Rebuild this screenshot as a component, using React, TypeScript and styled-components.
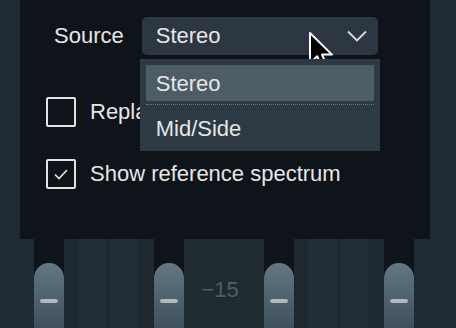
import React from 'react';
import styled, { createGlobalStyle } from 'styled-components';

const GlobalStyle = createGlobalStyle`
    body {
        margin: 0;
        background: #1e2930;
        font-family: "Liberation Sans", Arial, sans-serif;
    }
`;

const Screen = styled.div`
    position: relative;
    width: 456px;
    height: 328px;
    overflow: hidden;
    display: flex;
    flex-direction: column;
    background: #1e2930;
    box-shadow: inset -2px 0 0 #3a444b;
`;

const Top = styled.div`
    display: flex;
    height: 239px;
`;

const Strip = styled.div<{ $w: number }>`
    width: ${p => p.$w}px;
    background: #1f2a32;
`;

const Panel = styled.section`
    flex: 1;
    background: #0f141a;
    padding-top: 17px;
    color: #e6e6e6;
    font-size: 22px;
`;

const SourceRow = styled.div`
    display: flex;
    align-items: center;
    gap: 18px;
    padding-left: 34px;
`;

const SelectWrap = styled.div`
    position: relative;
`;

const SelectBox = styled.div`
    width: 236px;
    height: 38px;
    box-sizing: border-box;
    display: flex;
    align-items: center;
    justify-content: space-between;
    padding: 0 11px 0 14px;
    background: #2c3741;
    border-radius: 5px;

    svg{
        width: 20px;
        height: 12px;
    }
`;

const Menu = styled.ul`
    position: absolute;
    left: -2px;
    top: 42px;
    width: 240px;
    margin: 0;
    padding: 6px;
    box-sizing: border-box;
    list-style: none;
    background: #2e3a43;
    z-index: 2;
`;

const MenuItem = styled.li<{ $active?: boolean }>`
    height: ${p => (p.$active ? 36 : 40)}px;
    box-sizing: border-box;
    display: flex;
    align-items: center;
    padding: ${p => (p.$active ? '1px 0 0 10px' : '7px 0 0 10px')};
    background: ${p => (p.$active ? '#4e5c66' : 'transparent')};
`;

const Divider = styled.li`
    height: 0;
    margin: 3px 0 0 0;
    border-top: 1px dotted #6c7880;
`;

const CheckRow = styled.label<{ $top: number }>`
    display: flex;
    align-items: center;
    gap: 14px;
    margin-top: ${p => p.$top}px;
    padding-left: 26px;
`;

const Box = styled.span`
    width: 30px;
    height: 30px;
    box-sizing: border-box;
    border: 2px solid #e2e2e2;
    border-radius: 2px;
    display: flex;
    align-items: center;
    justify-content: center;

    svg{
        width: 14px;
        height: 11px;
    }
`;

const Faders = styled.div`
    display: flex;
    height: 89px;
`;

const Track = styled.div`
    width: 30px;
    padding-top: 24px;
    background: #0f141a;
    display: flex;
`;

const Thumb = styled.div`
    flex: 1;
    border-radius: 15px 15px 0 0;
    background: linear-gradient(#627782, #3e505b);
    display: flex;
    justify-content: center;
    padding-top: 36px;
`;

const Grip = styled.span`
    width: 18px;
    height: 4px;
    border-radius: 2px;
    background: #b2b8bd;
`;

const Meter = styled.div`
    width: 90px;
    display: flex;
`;

const Band = styled.div<{ $w: number; $light?: boolean }>`
    width: ${p => p.$w}px;
    background: ${p => (p.$light ? '#232e36' : '#1e2830')};
`;

const Scale = styled.div`
    width: 80px;
    box-sizing: border-box;
    padding: 40px 8px 0 0;
    background: #1f2a31;
    color: #4e5e68;
    font-size: 22px;
    line-height: 22px;
    text-align: center;
`;

const Cursor = styled.svg`
    position: absolute;
    left: 308px;
    top: 31px;
    width: 26px;
    height: 38px;
`;

const Fader: React.FC = () => (
    <Track>
        <Thumb><Grip /></Thumb>
    </Track>
);

const MeterBands: React.FC = () => (
    <Meter>
        <Band $w={14} />
        <Band $w={29} $light />
        <Band $w={3} />
        <Band $w={28} $light />
        <Band $w={16} />
    </Meter>
);

const App: React.FC = () => {
    return (
        <Screen>
            <GlobalStyle />
            <Top>
                <Strip $w={20} />
                <Panel>
                    <SourceRow>
                        <span>Source</span>
                        <SelectWrap>
                            <SelectBox>
                                <span>Stereo</span>
                                <svg viewBox="0 0 20 12" fill="none" stroke="#dcdcdc" strokeWidth="1.8">
                                    <path d="M1 1.5l9 9 9-9" />
                                </svg>
                            </SelectBox>
                            <Menu>
                                <MenuItem $active>Stereo</MenuItem>
                                <Divider />
                                <MenuItem>Mid/Side</MenuItem>
                            </Menu>
                        </SelectWrap>
                    </SourceRow>
                    <CheckRow $top={42}>
                        <Box />
                        <span>Replace</span>
                    </CheckRow>
                    <CheckRow $top={32}>
                        <Box>
                            <svg viewBox="0 0 14 11" fill="none" stroke="#e2e2e2" strokeWidth="1.7">
                                <path d="M1 5.5l4 4L13 1" />
                            </svg>
                        </Box>
                        <span>Show reference spectrum</span>
                    </CheckRow>
                </Panel>
                <Strip $w={26} />
            </Top>
            <Faders>
                <Strip $w={34} />
                <Fader />
                <MeterBands />
                <Fader />
                <Scale>−15</Scale>
                <Fader />
                <MeterBands />
                <Fader />
                <Strip $w={42} />
            </Faders>
            <Cursor viewBox="0 0 13 19">
                <path d="M1 1v15l3.6-3.4 2.6 5.8 2.3-1-2.5-5.6H12z" fill="#000" stroke="#fff" strokeWidth="1" strokeLinejoin="round" />
            </Cursor>
        </Screen>
    );
};

export default App;
